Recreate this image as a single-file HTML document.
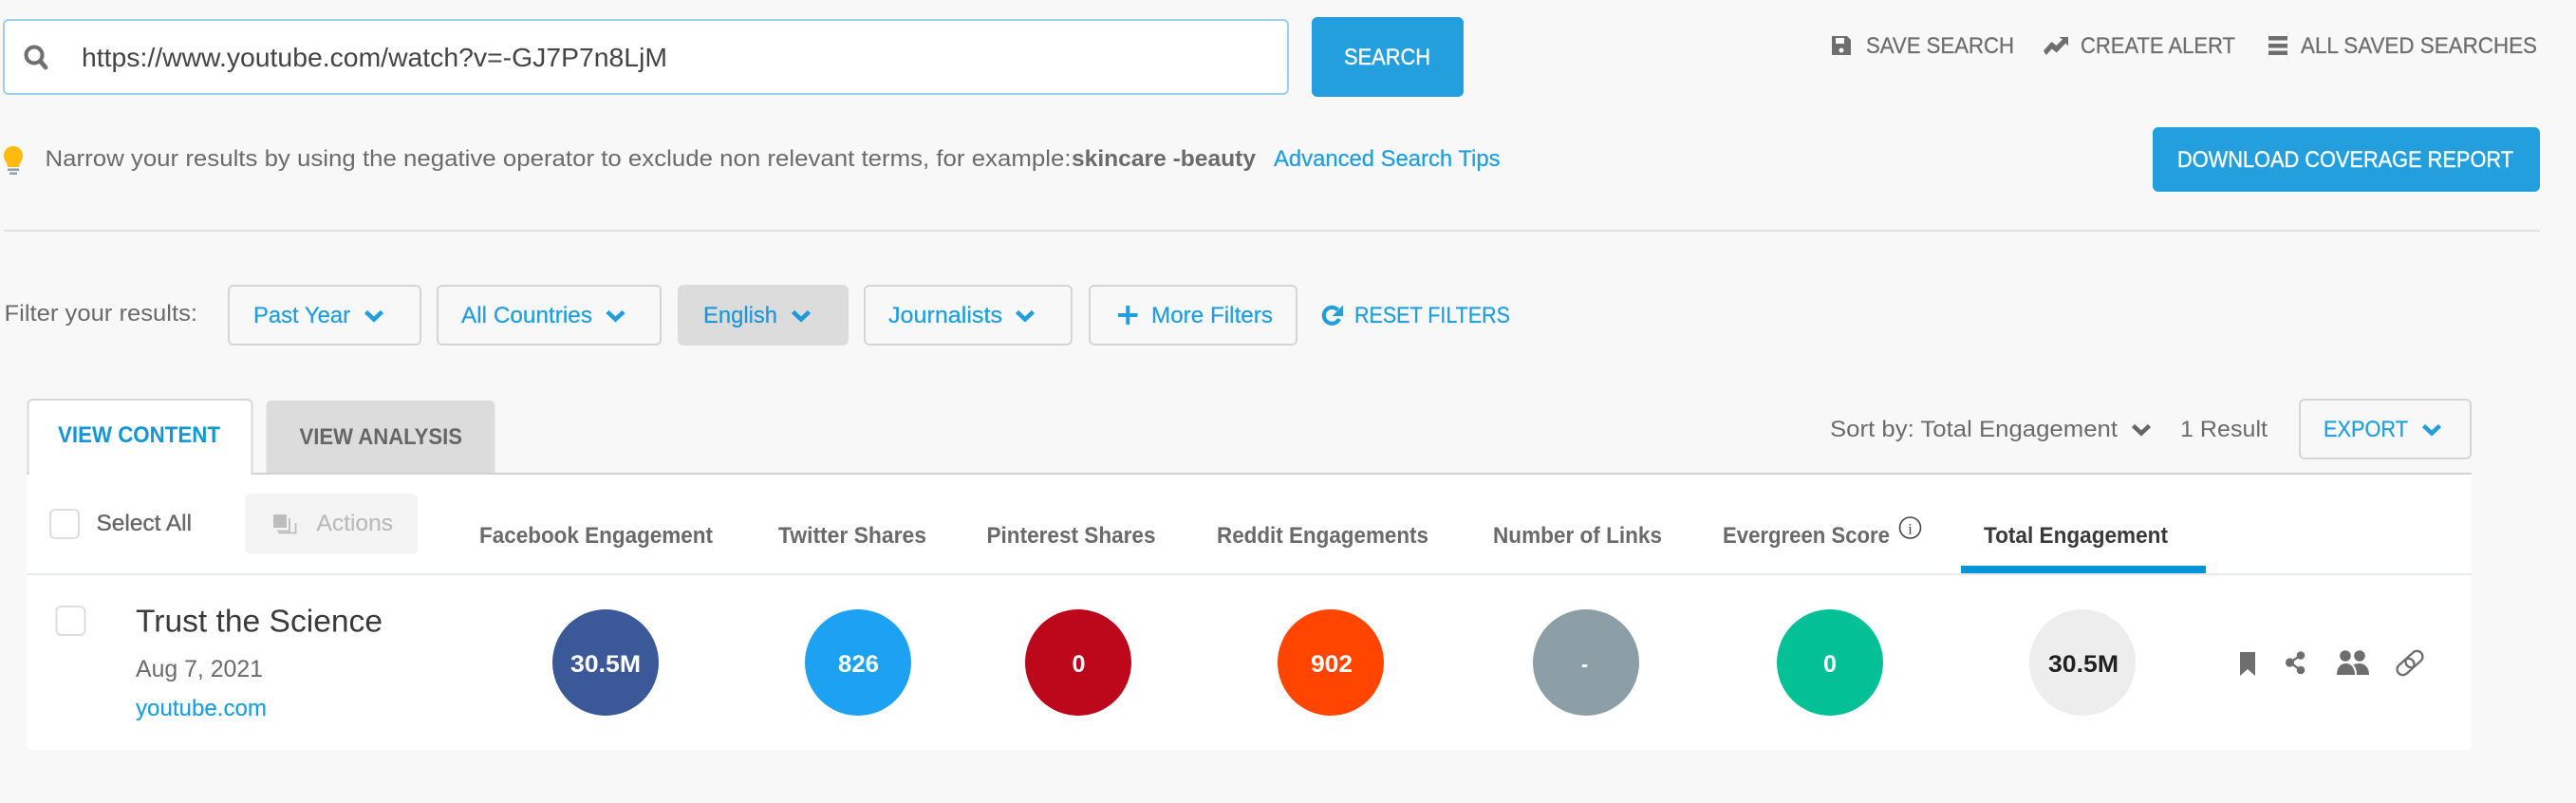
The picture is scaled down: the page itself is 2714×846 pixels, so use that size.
<!DOCTYPE html>
<html lang="en">
<head>
<meta charset="utf-8">
<title>Content results</title>
<style>
html,body{margin:0;padding:0;background:#f8f8f8;width:2714px;height:846px;overflow:hidden}
svg{display:block}
text{font-family:"Liberation Sans",Arial,sans-serif;white-space:pre}
.f24{font-size:24px}
.blue{fill:#219fdd}
.f24.blue{stroke:#219fdd;stroke-width:.25px}
.gray{fill:#6b6b6b}
.top{fill:#6e6e6e;stroke:#6e6e6e;stroke-width:.3px}
.wht{fill:#fff;stroke:#fff;stroke-width:.4px}
.hd{font-size:24px;font-weight:700;fill:#6a6a6a}
.num{font-size:25px;font-weight:700;fill:#fff}
.chev{fill:none;stroke-width:4.600px}
</style>
</head>
<body>
<svg xmlns="http://www.w3.org/2000/svg" width="2714" height="846" viewBox="0 0 2714 846">
<rect width="2714" height="846" fill="#f8f8f8"/>

<!-- search input -->
<rect x="4" y="21" width="1353" height="78" rx="5" fill="#fff" stroke="#9bcfee" stroke-width="2"/>
<circle cx="36" cy="58" r="8.500" fill="none" stroke="#6e6e6e" stroke-width="4"/>
<path d="M42.500 64.500l5.500 6.500" stroke="#6e6e6e" stroke-width="4.800" stroke-linecap="round"/>
<text x="86" y="70" font-size="27.500" fill="#444" textLength="617" lengthAdjust="spacingAndGlyphs">https://www.youtube.com/watch?v=-GJ7P7n8LjM</text>

<!-- search button -->
<rect x="1382" y="18" width="160" height="84" rx="6" fill="#229fdc"/>
<text x="1416" y="68" class="f24 wht" textLength="91" lengthAdjust="spacingAndGlyphs">SEARCH</text>

<!-- top links -->
<path d="M1930 38h16l4 4v16h-20zM1934 40v6h9v-6zM1940 50.500a2.500 2.500 0 1 0 .01 0z" fill="#6e6e6e" fill-rule="evenodd"/>
<text x="1966" y="56" class="f24 top" textLength="156" lengthAdjust="spacingAndGlyphs">SAVE SEARCH</text>
<path d="M2153 53.500l8.500-9.500 5 4 6.500-6.500-3.500-2.500h9.500v9.500l-2.700-3-9.500 10-5-4-6 6.500z" fill="#6e6e6e"/>
<text x="2192" y="56" class="f24 top" textLength="163" lengthAdjust="spacingAndGlyphs">CREATE ALERT</text>
<path d="M2390 38h20v4.500h-20zM2390 46h20v4.500h-20zM2390 53.500h20v4.500h-20z" fill="#6e6e6e"/>
<text x="2424" y="56" class="f24 top" textLength="249" lengthAdjust="spacingAndGlyphs">ALL SAVED SEARCHES</text>

<!-- hint row -->
<path d="M14 154c-5.800 0-10 4.500-10 10 0 4 2 6 3.200 8.500.6 1.300.8 2.500.8 3.500h12c0-1 .2-2.200.8-3.500C22 170 24 168 24 164c0-5.500-4.200-10-10-10z" fill="#ffb90f"/>
<rect x="8" y="177.500" width="12" height="2.500" fill="#8ca0ad"/>
<rect x="10" y="181.500" width="8" height="2.500" fill="#8ca0ad"/>
<text x="47.500" y="175" class="f24 gray" textLength="1081" lengthAdjust="spacingAndGlyphs">Narrow your results by using the negative operator to exclude non relevant terms, for example:</text>
<text x="1129" y="175" class="f24 gray" font-weight="700" textLength="194" lengthAdjust="spacingAndGlyphs">skincare -beauty</text>
<text x="1342" y="175" class="f24 blue" textLength="238.500" lengthAdjust="spacingAndGlyphs">Advanced Search Tips</text>

<!-- download button -->
<rect x="2268" y="134" width="408" height="68" rx="6" fill="#229fdc"/>
<text x="2294" y="176" class="f24 wht" textLength="354" lengthAdjust="spacingAndGlyphs">DOWNLOAD COVERAGE REPORT</text>

<rect x="4" y="242" width="2672" height="2" fill="#e2e2e2"/>

<!-- filters -->
<text x="4.500" y="338" class="f24 gray" textLength="203.500" lengthAdjust="spacingAndGlyphs">Filter your results:</text>

<rect x="241" y="301" width="202" height="62" rx="5" fill="none" stroke="#d5d5d5" stroke-width="2"/>
<text x="267" y="340" class="f24 blue" textLength="102" lengthAdjust="spacingAndGlyphs">Past Year</text>
<path class="chev" d="M385.500 328.500l8.500 8 8.500-8" stroke="#219fdd"/>

<rect x="461" y="301" width="235" height="62" rx="5" fill="none" stroke="#d5d5d5" stroke-width="2"/>
<text x="486" y="340" class="f24 blue" textLength="138" lengthAdjust="spacingAndGlyphs">All Countries</text>
<path class="chev" d="M640 328.500l8.500 8 8.500-8" stroke="#219fdd"/>

<rect x="714" y="300" width="180" height="64" rx="6" fill="#dcdcdc"/>
<text x="741" y="340" class="f24" fill="#1d98d8" stroke="#1d98d8" stroke-width=".25" textLength="78" lengthAdjust="spacingAndGlyphs">English</text>
<path class="chev" d="M835.500 328.500l8.500 8 8.500-8" stroke="#1d98d8"/>

<rect x="911" y="301" width="218" height="62" rx="5" fill="none" stroke="#d5d5d5" stroke-width="2"/>
<text x="936" y="340" class="f24 blue" textLength="120" lengthAdjust="spacingAndGlyphs">Journalists</text>
<path class="chev" d="M1071.500 328.500l8.500 8 8.500-8" stroke="#219fdd"/>

<rect x="1148" y="301" width="218" height="62" rx="5" fill="none" stroke="#d5d5d5" stroke-width="2"/>
<path d="M1178 330h20.500v4h-20.500zM1186.300 322h4v20h-4z" fill="#219fdd"/>
<text x="1213" y="340" class="f24 blue" textLength="128" lengthAdjust="spacingAndGlyphs">More Filters</text>

<path d="M1409.500 326.500a8.500 8.500 0 1 0 1.500 9.500" fill="none" stroke="#219fdd" stroke-width="4.200"/>
<path d="M1415 321.500v11.500h-11.500z" fill="#219fdd"/>
<text x="1427" y="340" class="f24 blue" textLength="164" lengthAdjust="spacingAndGlyphs">RESET FILTERS</text>

<!-- tabs -->
<rect x="28" y="498" width="2576" height="2" fill="#d2d2d2"/>
<path d="M280.500 498v-71a5 5 0 0 1 5-5h231a5 5 0 0 1 5 5v71z" fill="#dcdcdc"/>
<path d="M29.500 501v-75a5 5 0 0 1 5-5h226a5 5 0 0 1 5 5v75z" fill="#fff" stroke="#d8d8d8" stroke-width="2"/>
<text x="61" y="466" font-size="24" font-weight="700" fill="#1296d6" textLength="171" lengthAdjust="spacingAndGlyphs">VIEW CONTENT</text>
<text x="315.500" y="468" font-size="24" font-weight="700" fill="#666" textLength="171.500" lengthAdjust="spacingAndGlyphs">VIEW ANALYSIS</text>

<!-- sort row -->
<text x="1928" y="460" class="f24 gray" textLength="303" lengthAdjust="spacingAndGlyphs">Sort by: Total Engagement</text>
<path class="chev" d="M2247.500 448.500l8.500 8 8.500-8" stroke="#666"/>
<text x="2297" y="460" class="f24 gray" textLength="92" lengthAdjust="spacingAndGlyphs">1 Result</text>
<rect x="2423" y="421" width="180" height="62" rx="5" fill="none" stroke="#d5d5d5" stroke-width="2"/>
<text x="2448" y="460" class="f24 blue" textLength="89" lengthAdjust="spacingAndGlyphs">EXPORT</text>
<path class="chev" d="M2553.500 448.500l8.500 8 8.500-8" stroke="#219fdd"/>

<!-- panel -->
<path d="M28 500H2604V784a6 6 0 0 1-6 6H34a6 6 0 0 1-6-6z" fill="#fff"/>
<rect x="30.500" y="498" width="234" height="4" fill="#fff"/>

<rect x="53" y="537" width="30" height="30" rx="5" fill="#fff" stroke="#dedede" stroke-width="2"/>
<text x="101.500" y="559" class="f24" fill="#666" stroke="#666" stroke-width=".35" textLength="100.500" lengthAdjust="spacingAndGlyphs">Select All</text>

<rect x="258" y="520" width="182" height="64" rx="6" fill="#f4f4f4"/>
<path d="M288 542h14v14h-14z" fill="#bdbdbd"/>
<path d="M305 546v13.500h-13M311.500 551v10.500h-18" fill="none" stroke="#bdbdbd" stroke-width="1.800"/>
<text x="333.500" y="559" class="f24" fill="#bbb" stroke="#bbb" stroke-width=".25" textLength="80.500" lengthAdjust="spacingAndGlyphs">Actions</text>

<text x="505" y="572" class="hd" textLength="246" lengthAdjust="spacingAndGlyphs">Facebook Engagement</text>
<text x="820" y="572" class="hd" textLength="156" lengthAdjust="spacingAndGlyphs">Twitter Shares</text>
<text x="1039.500" y="572" class="hd" textLength="178" lengthAdjust="spacingAndGlyphs">Pinterest Shares</text>
<text x="1282" y="572" class="hd" textLength="223" lengthAdjust="spacingAndGlyphs">Reddit Engagements</text>
<text x="1573" y="572" class="hd" textLength="178" lengthAdjust="spacingAndGlyphs">Number of Links</text>
<text x="1815" y="572" class="hd" textLength="176" lengthAdjust="spacingAndGlyphs">Evergreen Score</text>
<circle cx="2012.500" cy="556" r="11" fill="none" stroke="#444" stroke-width="1.600"/>
<text x="2012.500" y="562.500" font-size="16" fill="#444" text-anchor="middle" style="font-family:'Liberation Serif',serif">i</text>
<text x="2090" y="572" font-size="24" font-weight="700" fill="#3a3a3a" textLength="194" lengthAdjust="spacingAndGlyphs">Total Engagement</text>

<rect x="28" y="604" width="2576" height="2" fill="#e6e9ee"/>
<rect x="2066" y="596" width="258" height="8" fill="#0095d6"/>

<!-- row -->
<rect x="59.500" y="639" width="30" height="30" rx="5" fill="#fff" stroke="#dedede" stroke-width="2"/>
<text x="143" y="665.500" font-size="33.500" fill="#3a3a3a" textLength="260" lengthAdjust="spacingAndGlyphs">Trust the Science</text>
<text x="143" y="713" font-size="25" class="gray" textLength="134" lengthAdjust="spacingAndGlyphs">Aug 7, 2021</text>
<text x="143" y="754" font-size="24" class="blue" stroke="#219fdd" stroke-width=".2" textLength="138" lengthAdjust="spacingAndGlyphs">youtube.com</text>

<circle cx="638" cy="698" r="56" fill="#3b5998"/>
<text x="601" y="708" class="num" textLength="74" lengthAdjust="spacingAndGlyphs">30.5M</text>
<circle cx="904" cy="698" r="56" fill="#1da1f2"/>
<text x="883" y="708" class="num" textLength="43" lengthAdjust="spacingAndGlyphs">826</text>
<circle cx="1136" cy="698" r="56" fill="#bd081c"/>
<text x="1129.500" y="708" class="num" textLength="14" lengthAdjust="spacingAndGlyphs">0</text>
<circle cx="1402" cy="698" r="56" fill="#ff4500"/>
<text x="1381" y="708" class="num" textLength="44" lengthAdjust="spacingAndGlyphs">902</text>
<circle cx="1671" cy="698" r="56" fill="#8c9ea6"/>
<text x="1666" y="708" class="num" textLength="7" lengthAdjust="spacingAndGlyphs">-</text>
<circle cx="1928" cy="698" r="56" fill="#04c097"/>
<text x="1921" y="708" class="num" textLength="14" lengthAdjust="spacingAndGlyphs">0</text>
<circle cx="2194" cy="698" r="56" fill="#ededed"/>
<text x="2158" y="708" font-size="25" font-weight="700" fill="#222" textLength="74" lengthAdjust="spacingAndGlyphs">30.5M</text>

<!-- row icons -->
<path d="M2360 687h16v25l-8-7-8 7z" fill="#6e6e6e"/>
<g fill="#6e6e6e">
<circle cx="2424" cy="690.500" r="4.300"/>
<circle cx="2412.500" cy="698" r="4.600"/>
<circle cx="2424" cy="706" r="4.300"/>
</g>
<path d="M2424 690.500l-11.500 7.500 11.500 8" fill="none" stroke="#6e6e6e" stroke-width="2.400"/>
<g fill="#6e6e6e">
<circle cx="2471" cy="691" r="5.800"/>
<circle cx="2486" cy="691" r="5.800"/>
<path d="M2462 711c0-7 3.500-12 9.500-12s9.500 5 9.500 12z"/>
<path d="M2483 711c0-4-1-8-3.500-10.500 1.800-1 3.700-1.500 6.500-1.500 6 0 10 5 10 12z"/>
</g>
<g fill="none" stroke="#6e6e6e" stroke-width="2.300" transform="rotate(-42 2539 698.500)">
<rect x="2523" y="692.500" width="20" height="12" rx="6"/>
<rect x="2535" y="692.500" width="20" height="12" rx="6"/>
</g>
</svg>
</body>
</html>
